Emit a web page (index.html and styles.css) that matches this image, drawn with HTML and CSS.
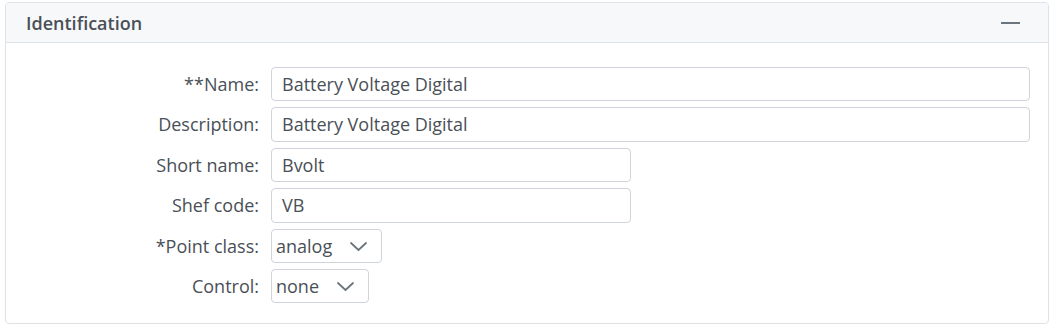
FILE: index.html
```html
<!DOCTYPE html>
<html>
<head>
<meta charset="utf-8">
<link rel="stylesheet" href="styles.css">
</head>
<body>
<div class="card">
  <div class="card-header">
    <span class="title">Identification</span>
    <span class="collapse-btn"><svg width="19" height="4" viewBox="0 0 19 4"><rect x="0" y="1" width="19" height="2" fill="#6c757d"/></svg></span>
  </div>
  <div class="card-body">
    <div class="form">
      <label class="lbl">**Name:</label>
      <div class="field"><div class="input full">Battery Voltage Digital</div></div>
      <label class="lbl">Description:</label>
      <div class="field"><div class="input full">Battery Voltage Digital</div></div>
      <label class="lbl">Short name:</label>
      <div class="field"><div class="input mid">Bvolt</div></div>
      <label class="lbl">Shef code:</label>
      <div class="field"><div class="input mid">VB</div></div>
      <label class="lbl">*Point class:</label>
      <div class="field"><div class="select sel-point"><span>analog</span><svg class="chev" width="17" height="9" viewBox="0 0 17 9"><path d="M1 1 L8.5 8 L16 1" fill="none" stroke="#6c757d" stroke-width="1.8" stroke-linecap="round" stroke-linejoin="round"/></svg></div></div>
      <label class="lbl">Control:</label>
      <div class="field"><div class="select sel-control"><span>none</span><svg class="chev" width="17" height="9" viewBox="0 0 17 9"><path d="M1 1 L8.5 8 L16 1" fill="none" stroke="#6c757d" stroke-width="1.8" stroke-linecap="round" stroke-linejoin="round"/></svg></div></div>
    </div>
  </div>
</div>
</body>
</html>
```
FILE: styles.css
```css
html, body {
  margin: 0;
  padding: 0;
  background: #fff;
}
body {
  padding: 2px 7px 0 5px;
  font-family: "Open Sans", "Noto Sans", sans-serif;
  font-size: 18px;
  color: #495057;
}
.card {
  border: 1px solid #dee2e6;
  border-radius: 4px;
  height: 322px;
  box-sizing: border-box;
  display: flex;
  flex-direction: column;
  overflow: hidden;
}
.card-header {
  height: 39px;
  background: #f7f8fa;
  border-bottom: 1px solid #dee2e6;
  display: flex;
  align-items: center;
  justify-content: space-between;
  padding: 0 28px 0 20px;
}
.title {
  font-weight: 600;
  font-size: 18px;
  color: #495057;
}
.collapse-btn {
  display: flex;
  align-items: center;
}
.card-body {
  padding: 24px 18px 0 0;
}
.form {
  display: grid;
  grid-template-columns: 253px 1fr;
  column-gap: 12px;
  row-gap: 6px;
}
.lbl {
  text-align: right;
  height: 34.4px;
  line-height: 34.4px;
  white-space: nowrap;
  color: #495057;
}
.field {
  display: flex;
}
.input {
  box-sizing: border-box;
  height: 34.4px;
  line-height: 32.4px;
  border: 1px solid #ced4da;
  border-radius: 4px;
  padding: 0 10px;
  color: #495057;
  background: #fff;
  white-space: nowrap;
}
.full { width: 100%; }
.mid { width: 360px; }
.select {
  box-sizing: border-box;
  height: 34.4px;
  border: 1px solid #ced4da;
  border-radius: 4px;
  padding: 0 14px 0 4px;
  display: flex;
  align-items: center;
  justify-content: space-between;
  color: #495057;
  background: #fff;
}
.sel-point { width: 111px; }
.sel-control { width: 97.5px; }
.chev { display: block; margin-top: 1px; }
```
